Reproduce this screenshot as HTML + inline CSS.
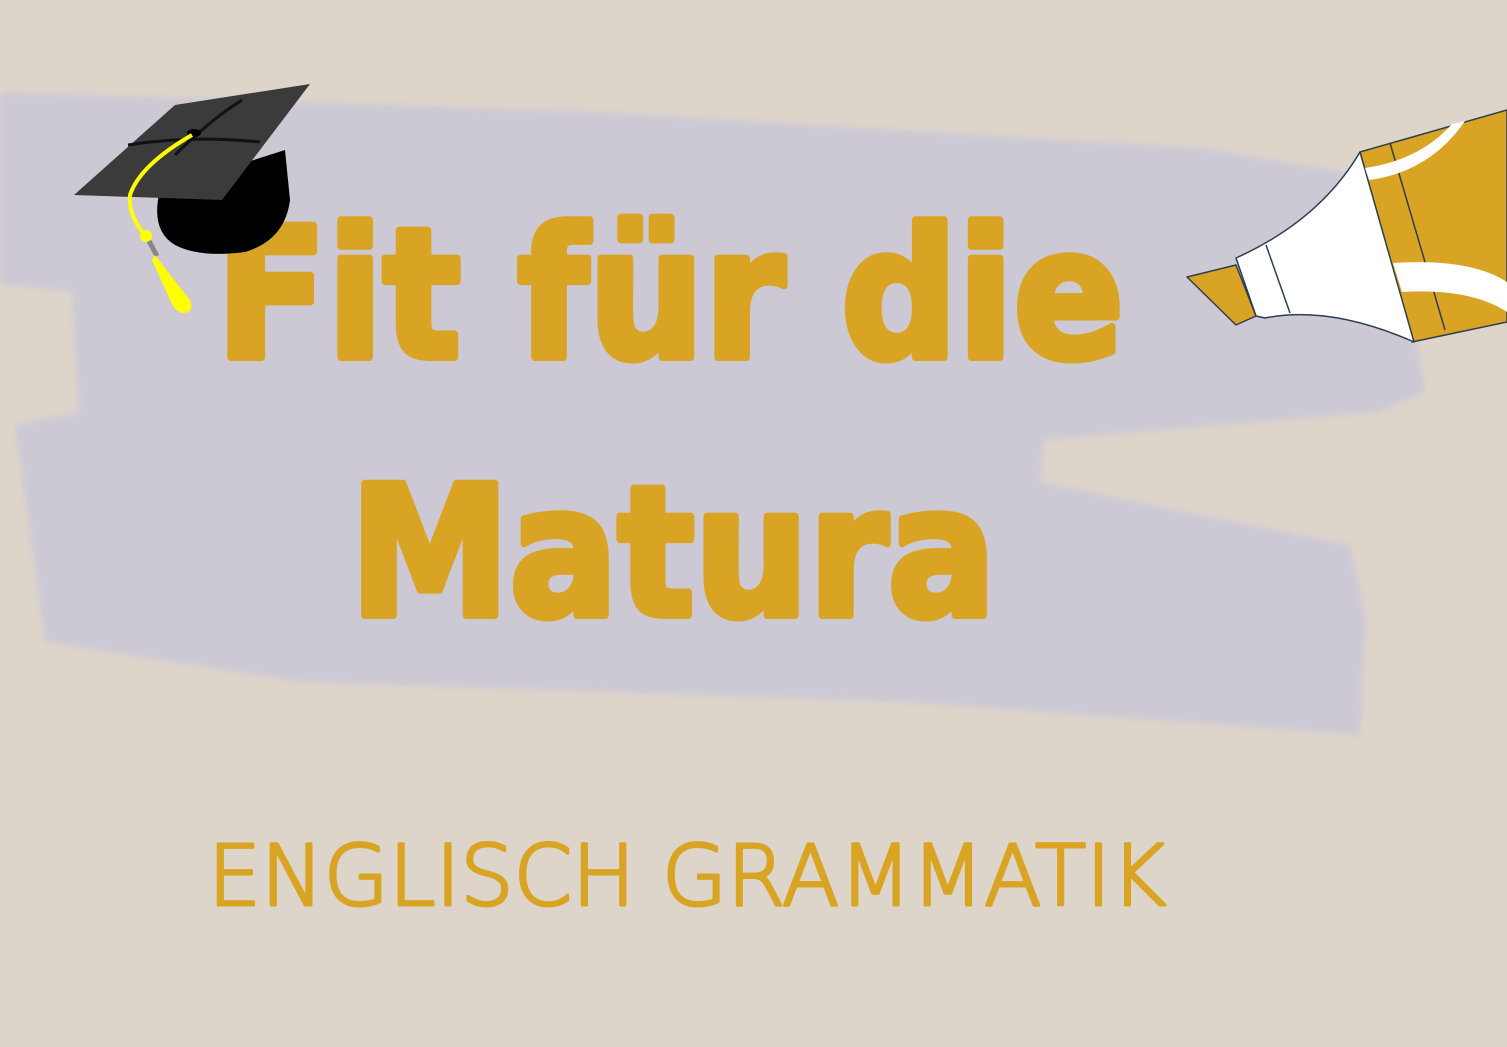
<!DOCTYPE html>
<html><head><meta charset="utf-8"><style>
html,body{margin:0;padding:0;background:#ddd5ca;}
svg{display:block}
</style></head><body>
<svg width="1507" height="1047" viewBox="0 0 1507 1047" xmlns="http://www.w3.org/2000/svg">
<defs><filter id="b"><feGaussianBlur stdDeviation="3"/></filter></defs>
<rect width="1507" height="1047" fill="#ddd5ca"/>
<polygon filter="url(#b)" fill="#cdc9d4" points="0,92 600,112 1200,148 1345,172 1410,290 1425,392 1380,412 1045,440 1040,482 1350,545 1366,620 1360,735 900,702 300,682 45,642 15,425 78,412 72,292 0,284"/>
<g fill="#d9a423" stroke="#d9a423" stroke-linejoin="round" font-family="DejaVu Sans, sans-serif" font-weight="bold">
<text x="216" y="357" font-size="180" stroke-width="8" textLength="908" lengthAdjust="spacingAndGlyphs">Fit für die</text>
<text x="350" y="615" font-size="180" stroke-width="8" textLength="646" lengthAdjust="spacingAndGlyphs">Matura</text>
</g>
<text x="208" y="905" font-family="DejaVu Sans, sans-serif" font-weight="200" font-size="84" fill="#d9a423" stroke="#d9a423" stroke-width="3" stroke-linejoin="round" stroke-linecap="round" textLength="958" lengthAdjust="spacingAndGlyphs">ENGLISCH GRAMMATIK</text>
<!-- cap -->
<path d="M160,190 Q150,230 175,245 Q200,258 245,252 Q285,240 290,200 L285,150 Z" fill="#000"/>
<polygon points="74,195 175,105 310,84 222,200" fill="#3b3b3b"/>
<path d="M128,145 Q190,135 260,142" stroke="#111" stroke-width="3" fill="none"/>
<path d="M175,155 Q210,120 242,100" stroke="#111" stroke-width="3" fill="none"/>
<ellipse cx="194" cy="133" rx="7" ry="4" fill="#000"/>
<path d="M192,135 Q140,165 130,195 Q128,215 145,235" stroke="#ffff00" stroke-width="4" fill="none"/>
<circle cx="146" cy="236" r="6" fill="#ffff00"/>
<line x1="149" y1="241" x2="157" y2="256" stroke="#888" stroke-width="5"/>
<path d="M155,255 Q170,275 190,300 Q195,312 183,313 Q175,312 170,300 L152,260 Z" fill="#ffff00"/>
<!-- marker -->
<g stroke="#2d3e50" stroke-width="1.5" stroke-linejoin="round">
<polygon points="1507,110 1360,152 1412,342 1507,322" fill="#d9a423"/>
<polygon points="1187,277 1236,265 1256,316 1236,325" fill="#d9a423"/>
<path d="M1236,258 Q1320,220 1360,152 L1414,342 Q1330,305 1265,318 L1256,316 Z" fill="#fff"/>
<line x1="1266" y1="245" x2="1290" y2="313"/>
<line x1="1390" y1="143" x2="1445" y2="330" fill="none"/>
</g>
<path d="M1365,168 Q1420,160 1452,124 L1465,121 Q1430,172 1369,180 Z" fill="#fff"/>
<path d="M1393,263 Q1470,258 1507,282 L1507,312 Q1470,288 1402,292 Z" fill="#fff"/>
</svg>
</body></html>
